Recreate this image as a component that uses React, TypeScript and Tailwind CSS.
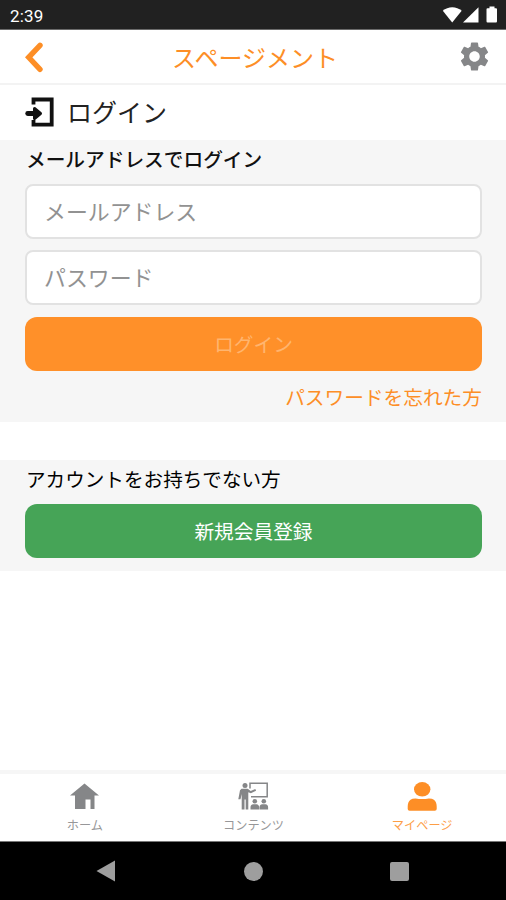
import { useState } from 'react';
import type { ReactNode } from 'react';

const StatusBar = () => (
  <div className="flex h-[30px] shrink-0 items-center justify-between border-b border-[#6b6b6b] bg-[#212121] pl-[10px] pr-[7px] text-white">
    <span className="pt-[3px] font-[Roboto] text-[17px] leading-none tracking-[0.2px]">2:39</span>
    <svg width="57" height="18" viewBox="0 0 57 18" fill="currentColor">
      <path d="M0.800 4.700C6 0 14.500 0 19.700 4.700L10.200 16.500z" />
      <path d="M36.500 1.300V16.500H21z" />
      <path d="M47.500 0.500h5v1.800h1.500q1 0 1 1v12q0 1.200-1 1.200h-8.500q-1 0-1-1.200v-12q0-1 1-1h2z" />
    </svg>
  </div>
);

const Header = () => (
  <header className="flex h-[55px] shrink-0 items-center justify-between border-b-2 border-[#f3f3f3] pl-[24px] pr-[14px]">
    <svg width="20" height="32" viewBox="0 0 20 32" fill="none" stroke="#fd8e26" strokeWidth="5.400">
      <path d="M16 4.300L4.700 16.300L16 28.300" strokeLinecap="round" strokeLinejoin="miter" />
    </svg>
    <h1 className="pl-[9px] text-[24px] leading-none text-[#fd8e26]">スページメント</h1>
    <svg width="35" height="35" viewBox="0 0 24 24" fill="#858688">
      <path d="M19.140 12.940c.04-.3.06-.61.06-.94 0-.32-.02-.64-.07-.94l2.030-1.580c.18-.14.23-.41.12-.61l-1.920-3.320c-.12-.22-.37-.29-.59-.22l-2.390.96c-.5-.38-1.030-.7-1.620-.94l-.36-2.540c-.04-.24-.24-.41-.48-.41h-3.840c-.24 0-.43.17-.47.41l-.36 2.540c-.59.24-1.130.57-1.620.94l-2.390-.96c-.22-.08-.47 0-.59.22L2.740 8.870c-.12.21-.08.47.12.61l2.030 1.580c-.05.3-.09.63-.09.94s.02.64.07.94l-2.030 1.580c-.18.14-.23.41-.12.61l1.920 3.320c.12.22.37.29.59.22l2.390-.96c.5.38 1.030.7 1.620.94l.36 2.540c.05.24.24.41.48.41h3.840c.24 0 .44-.17.47-.41l.36-2.540c.59-.24 1.130-.56 1.620-.94l2.390.96c.22.08.47 0 .59-.22l1.920-3.320c.12-.22.07-.47-.12-.61l-2.010-1.580zM12 15.600c-1.980 0-3.600-1.620-3.600-3.600s1.620-3.600 3.600-3.600 3.600 1.620 3.600 3.600-1.620 3.600-3.600 3.600z" />
    </svg>
  </header>
);

const PageTitle = () => (
  <div className="flex h-[55px] shrink-0 items-center pb-[2px] pl-[25px]">
    <svg width="30" height="30" viewBox="0 0 30 30" fill="none" stroke="#111">
      <path d="M8.500 7.500V2.500h18.200v25.200H8.500v-4.700" strokeWidth="3.800" />
      <path d="M2.700 16.500h7" strokeWidth="4.800" strokeLinecap="round" />
      <path d="M9.500 11.500L15.500 16.500l-6 5z" fill="#111" strokeWidth="3" strokeLinejoin="round" />
    </svg>
    <h2 className="ml-[12px] text-[25px] leading-none text-[#222]">ログイン</h2>
  </div>
);

const HomeIcon = () => (
  <svg width="32" height="32" viewBox="0 0 32 32" fill="currentColor">
    <path d="M16.500 2.500L31 14.500H26.500v13.500h-4V18.500h-5V28H7V14.500H2z" />
  </svg>
);

const ContentsIcon = () => (
  <svg width="32" height="32" viewBox="0 0 32 32" fill="currentColor">
    <circle cx="8" cy="4.600" r="2.500" />
    <path d="M4.500 7.800h6.200l3 2.100 4.600-2 .8 1.800-5.200 2.600-2.600-1V28.500H8.700V18.500H7.500V28.500H4.700V13L3.500 18.300H1.300L3 9.200z" />
    <path d="M13 7.500V2.200h17.200v13.600H14" fill="none" stroke="currentColor" strokeWidth="1.500" />
    <circle cx="17.800" cy="20.200" r="2.300" />
    <circle cx="26.800" cy="20.200" r="2.300" />
    <path d="M13.500 28.500v-2.300q0-2.600 2.700-2.900h3.200q2.700.3 2.700 2.900v2.300zM22.500 28.500v-2.300q0-2.600 2.700-2.900h3.200q2.700.3 2.700 2.900v2.300z" />
  </svg>
);

const MyPageIcon = () => (
  <svg width="32" height="32" viewBox="0 0 32 32" fill="currentColor">
    <ellipse cx="16.200" cy="8.300" rx="8.200" ry="7.200" />
    <path d="M1.700 25.500q0-4.500 2.800-6.800 1.600-1.300 5-1.300 6.700 1.300 13.400 0 3.400 0 5 1.300 2.800 2.300 2.800 6.800v2.500q0 1.800-1.900 1.800H3.600q-1.900 0-1.900-1.800z" />
  </svg>
);

const TabItem = ({ icon, label, active }: { icon: ReactNode; label: string; active?: boolean }) => (
  <div className={`flex flex-1 flex-col items-center pt-[7px] ${active ? 'text-[#fd8e26]' : 'text-[#858688]'}`}>
    {icon}
    <span className="mt-[5px] pl-px text-[12.200px] leading-[14px] opacity-85">{label}</span>
  </div>
);

export default function App() {
  const [mail, setMail] = useState('');
  const [password, setPassword] = useState('');
  const inputClass =
    'block h-[55px] w-full rounded-[8px] border-2 border-[#e2e2e2] bg-white pb-[2px] pl-[17px] text-[21.900px] text-[#222] placeholder-[#929292] focus:outline-none';

  return (
    <div className="flex h-[900px] w-[506px] flex-col overflow-hidden bg-white font-['Noto_Sans_CJK_JP',sans-serif]">
      <StatusBar />
      <Header />
      <PageTitle />
      <section className="h-[282px] shrink-0 bg-[#f6f6f6] pl-[25px] pr-[24px]">
        <h3 className="pl-px pt-[4px] text-[19.700px] font-medium leading-[30px] text-[#111]">メールアドレスでログイン</h3>
        <input
          className={`mt-[10px] ${inputClass}`}
          placeholder="メールアドレス"
          value={mail}
          onChange={(e) => setMail(e.target.value)}
        />
        <input
          className={`mt-[11px] ${inputClass}`}
          type="password"
          placeholder="パスワード"
          value={password}
          onChange={(e) => setPassword(e.target.value)}
        />
        <button className="mt-[12px] block h-[54px] w-full rounded-[12px] bg-[#ff9029] text-[19.700px] text-[#ffb56f]">ログイン</button>
        <div className="mt-[11px] text-right text-[19.700px] leading-[30px] text-[#fd8e26]">パスワードを忘れた方</div>
      </section>
      <section className="mt-[38px] h-[111px] shrink-0 bg-[#f6f6f6] pl-[25px] pr-[24px]">
        <h3 className="pl-px pt-[4px] text-[19.600px] leading-[30px] text-black">アカウントをお持ちでない方</h3>
        <button className="mt-[10px] block h-[54px] w-full rounded-[12px] bg-[#46a457] text-[19.700px] text-white">新規会員登録</button>
      </section>
      <nav className="mt-auto flex h-[72px] shrink-0 border-b border-t-4 border-b-[#777] border-t-[#f6f6f6]">
        <TabItem icon={<HomeIcon />} label="ホーム" />
        <TabItem icon={<ContentsIcon />} label="コンテンツ" />
        <TabItem icon={<MyPageIcon />} label="マイページ" active />
      </nav>
      <div className="flex h-[58px] shrink-0 items-center justify-between bg-black pl-[96px] pr-[97px]">
        <svg width="20" height="22" viewBox="0 0 20 22" fill="#9e9e9e">
          <path d="M19 0.500v21L0.500 11z" />
        </svg>
        <div className="h-[19px] w-[19px] rounded-full bg-[#9e9e9e]" />
        <div className="h-[19px] w-[19px] rounded-[2px] bg-[#9e9e9e]" />
      </div>
    </div>
  );
}
